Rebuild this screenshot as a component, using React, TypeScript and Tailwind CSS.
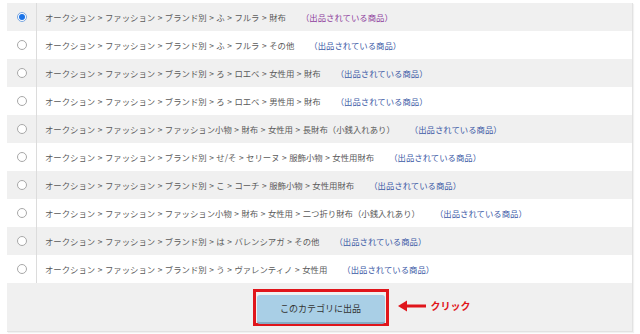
import React from "react";

const rows: { path: string; visited?: boolean; checked?: boolean }[] = [
  { path: "オークション > ファッション > ブランド別 > ふ > フルラ > 財布", visited: true, checked: true },
  { path: "オークション > ファッション > ブランド別 > ふ > フルラ > その他" },
  { path: "オークション > ファッション > ブランド別 > ろ > ロエベ > 女性用 > 財布" },
  { path: "オークション > ファッション > ブランド別 > ろ > ロエベ > 男性用 > 財布" },
  { path: "オークション > ファッション > ファッション小物 > 財布 > 女性用 > 長財布（小銭入れあり）" },
  { path: "オークション > ファッション > ブランド別 > せ/そ > セリーヌ > 服飾小物 > 女性用財布" },
  { path: "オークション > ファッション > ブランド別 > こ > コーチ > 服飾小物 > 女性用財布" },
  { path: "オークション > ファッション > ファッション小物 > 財布 > 女性用 > 二つ折り財布（小銭入れあり）" },
  { path: "オークション > ファッション > ブランド別 > は > バレンシアガ > その他" },
  { path: "オークション > ファッション > ブランド別 > う > ヴァレンティノ > 女性用" },
];

function Radio({ checked }: { checked?: boolean }) {
  return checked ? (
    <span className="w-[10px] h-[10px] rounded-full border border-[#7aa7e0] bg-white flex items-center justify-center">
      <span className="w-[6px] h-[6px] rounded-full bg-[#1a73e8]" />
    </span>
  ) : (
    <span className="w-[10px] h-[10px] rounded-full border border-[#a8a8a8] bg-white" />
  );
}

function Path({ text }: { text: string }) {
  const parts = text.split(" > ");
  return (
    <span className="flex items-center">
      {parts.map((p, i) => (
        <React.Fragment key={i}>
          {i > 0 && <span className="px-[2.5px]">&gt;</span>}
          <span>{p}</span>
        </React.Fragment>
      ))}
    </span>
  );
}

export default function App() {
  return (
    <div
      className="w-[640px] h-[334px] bg-white pt-[3px] px-[7px]"
      style={{ fontFamily: '"Noto Sans CJK JP", "Noto Sans", sans-serif' }}
    >
      <div className="w-[626px] border-r border-b border-[#e2e2e2] shadow-[1px_1px_1px_rgba(0,0,0,0.05)]">
        {rows.map((r, i) => (
          <div
            key={i}
            className={`flex h-[28px] items-center ${i % 2 === 0 ? "bg-[#f0f0f0]" : "bg-white"}`}
          >
            <div className="w-[30px] h-full flex items-center justify-center border-r border-[#dcdcdc]">
              <Radio checked={r.checked} />
            </div>
            <div className="flex items-center pl-[8px] text-[8.4px] leading-none text-[#5a5a5a] whitespace-nowrap">
              <Path text={r.path} />
              <span className={`ml-[15px] ${r.visited ? "text-[#8e3d9c]" : "text-[#3c5aa6]"}`}>
                （出品されている商品）
              </span>
            </div>
          </div>
        ))}
        <div className="h-[48px] bg-[#f0f0f0] flex justify-center pt-[6px] pl-[2px]">
          <div className="relative">
            <div className="w-[136px] h-[37px] border-[3px] border-[#e0151b] p-[1px]">
              <button className="w-full h-full rounded-[3px] bg-[#a9cfe6] border-b-[2px] border-[#86abc4] text-[9px] text-[#333] leading-none">
                このカテゴリに出品
              </button>
            </div>
            <div className="absolute left-[145px] top-[11px] flex items-center gap-[5px] whitespace-nowrap">
              <svg width="28" height="12" viewBox="0 0 28 12">
                <path d="M28 6 H5" stroke="#e0151b" strokeWidth="3" />
                <path d="M0 6 L9 0.5 L9 11.5 Z" fill="#e0151b" />
              </svg>
              <span className="text-[10px] font-bold text-[#e0151b] leading-none">クリック</span>
            </div>
          </div>
        </div>
      </div>
    </div>
  );
}
